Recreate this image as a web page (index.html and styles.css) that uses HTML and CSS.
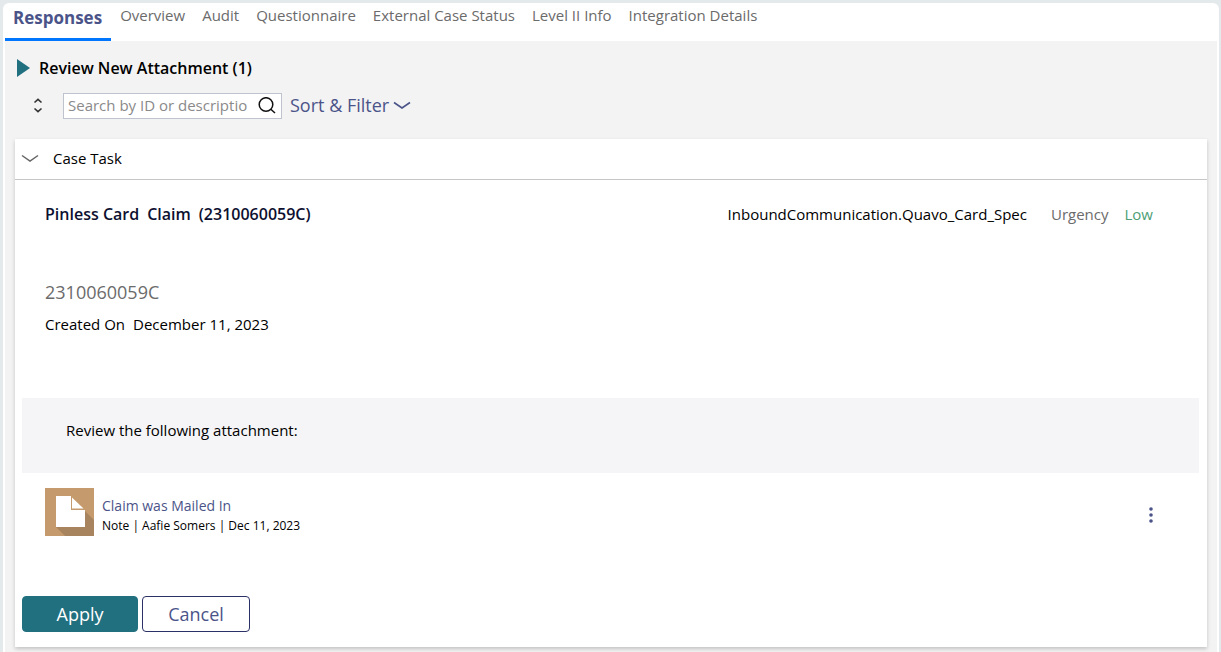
FILE: index.html
```
<!DOCTYPE html>
<html lang="en">
<head>
    <meta charset="UTF-8">
    <meta name="viewport" content="width=device-width, initial-scale=1.0">
    <title>Responses</title>
    <link rel="stylesheet" href="styles.css">
</head>
<body>
    <div class="panel">
        <nav class="tabs">
            <a href="#responses" class="tab active">Responses</a>
            <a href="#overview" class="tab">Overview</a>
            <a href="#audit" class="tab">Audit</a>
            <a href="#questionnaire" class="tab">Questionnaire</a>
            <a href="#status" class="tab">External Case Status</a>
            <a href="#level2" class="tab">Level II Info</a>
            <a href="#integration" class="tab">Integration Details</a>
        </nav>

        <main class="content">
            <h1 class="section-title">
                <svg width="13" height="18" viewBox="0 0 13 18"><path d="M0 0L13 9L0 18Z" fill="#217080"/></svg>
                Review New Attachment (1)
            </h1>

            <div class="toolbar">
                <button class="icon-button" aria-label="Expand or collapse all">
                    <svg width="10" height="16" viewBox="0 0 10 16" fill="none" stroke="#333" stroke-width="1.6"><path d="M1.5 4.5L5 1.3L8.5 4.5M1.5 10.5L5 13.7L8.5 10.5"/></svg>
                </button>
                <div class="search">
                    <input type="text" placeholder="Search by ID or description" aria-label="Search by ID or description">
                    <button class="icon-button" aria-label="Search">
                        <svg width="18" height="18" viewBox="0 0 18 18" fill="none" stroke="#111" stroke-width="1.5"><circle cx="8" cy="7.5" r="6.8"/><path d="M12.8 12.3L17 16"/></svg>
                    </button>
                </div>
                <button class="sort-button">
                    Sort &amp; Filter
                    <svg width="18" height="8" viewBox="0 0 18 8" fill="none" stroke="#4b5489" stroke-width="1.6"><path d="M1 1.5L9 7L17 1.5"/></svg>
                </button>
            </div>

            <section class="card">
                <h2 class="card-header">
                    <svg width="18" height="8" viewBox="0 0 18 8" fill="none" stroke="#666" stroke-width="1.5"><path d="M1 1.5L9 7L17 1.5"/></svg>
                    Case Task
                </h2>

                <div class="claim-row">
                    <h3 class="claim-title"><span>Pinless Card</span> <span>Claim</span> <span>(2310060059C)</span></h3>
                    <span class="claim-type">InboundCommunication.Quavo_Card_Spec</span>
                    <span class="urgency-label">Urgency</span>
                    <span class="urgency">Low</span>
                </div>

                <div class="case-info">
                    <div class="case-id">2310060059C</div>
                    <div class="created"><span>Created On</span> <span>December 11, 2023</span></div>
                </div>

                <p class="instruction">Review the following attachment:</p>

                <div class="attachment">
                    <svg class="file-icon" width="49" height="48" viewBox="0 0 49 48">
                        <path d="M0 0H49V48H0Z" fill="#c59b6d"/>
                        <path d="M40 23L49 32V48H20L11 39Z" fill="#a8845e"/>
                        <path d="M11 8H26V22H40V39H11Z" fill="#fff"/>
                        <path d="M27 9.5L38.5 20.5H27Z" fill="#fff"/>
                    </svg>
                    <div class="attachment-text">
                        <a href="#note">Claim was Mailed In</a>
                        <div class="meta">Note | Aafie Somers | Dec 11, 2023</div>
                    </div>
                    <button class="icon-button more" aria-label="Attachment actions">
                        <svg width="4" height="16" viewBox="0 0 4 16" fill="#4b5489"><circle cx="2" cy="2" r="1.8"/><circle cx="2" cy="8" r="1.8"/><circle cx="2" cy="14" r="1.8"/></svg>
                    </button>
                </div>

                <div class="actions">
                    <button class="btn primary">Apply</button>
                    <button class="btn">Cancel</button>
                </div>
            </section>
        </main>
    </div>
</body>
</html>
```
FILE: styles.css
```
* {
    box-sizing: border-box;
}
body {
    margin: 0;
    padding: 3px 2px 0 3px;
    min-height: 100vh;
    display: flex;
    background: #e4eaec;
    color: #000;
    font-family: "Open Sans", "Noto Sans", sans-serif;
    font-size: 15px;
    line-height: 20px;
}
h1, h2, h3, p {
    margin: 0;
    font-weight: normal;
}
a {
    color: #4b5489;
    text-decoration: none;
}
svg {
    display: block;
    flex: none;
}
button {
    font-family: inherit;
    cursor: pointer;
}
.panel {
    flex: 1;
    display: flex;
    flex-direction: column;
    padding: 0 2px;
    background: #fff;
    border-radius: 6px 6px 0 0;
}
.tabs {
    display: flex;
    align-items: flex-start;
    gap: 17px;
    height: 38px;
}
.tab {
    padding-top: 2px;
    color: #6b6b6b;
}
.tab.active {
    height: 38px;
    padding: 5px 9px 0 8px;
    margin-right: -8px;
    border-bottom: 3px solid #0076ff;
    color: #4b5489;
    font-size: 17px;
    font-weight: bold;
}
.content {
    flex: 1;
    padding: 16px 10px 5px;
    background: #f3f3f3;
}
.section-title {
    display: flex;
    align-items: center;
    gap: 9px;
    padding-left: 2px;
    font-size: 16px;
    line-height: 22px;
    font-weight: 600;
}
.toolbar {
    display: flex;
    align-items: center;
    padding: 14px 0 20px 18px;
}
.icon-button {
    padding: 0;
    border: none;
    background: none;
}
.search {
    display: flex;
    align-items: center;
    width: 219px;
    height: 26px;
    margin: 0 8px 0 20px;
    padding: 0 5px 0 4px;
    background: #fff;
    border: 1px solid #bfc3ce;
}
.search input {
    flex: 1;
    min-width: 0;
    margin-right: 10px;
    padding: 0 0 2px;
    border: none;
    outline: none;
    background: none;
    font-family: inherit;
    font-size: 15px;
}
.search input::placeholder {
    color: #8a8a8a;
}
.sort-button {
    display: flex;
    align-items: center;
    gap: 4px;
    padding: 0 0 2px;
    border: none;
    background: none;
    color: #4b5489;
    font-size: 18px;
    line-height: 24px;
}
.card {
    background: #fff;
    box-shadow: 0 2px 4px rgba(0, 0, 0, 0.2);
    padding-bottom: 15px;
}
.card-header {
    display: flex;
    align-items: center;
    gap: 14px;
    height: 41px;
    padding: 0 0 2px 6px;
    border-bottom: 1px solid #c6c6c6;
    font-size: 15px;
}
.claim-row {
    display: flex;
    align-items: center;
    padding: 24px 54px 0 30px;
}
.claim-title {
    display: flex;
    gap: 8px;
    flex: 1;
    color: #0d1030;
    font-size: 16px;
    font-weight: 600;
}
.urgency-label {
    margin: 0 16px 0 24px;
    color: #6b6b6b;
}
.urgency {
    color: #4d9e76;
}
.case-info {
    padding: 56px 30px 64px;
}
.case-id {
    margin-bottom: 10px;
    color: #6b6b6b;
    font-size: 18px;
    line-height: 24px;
}
.created {
    display: flex;
    gap: 8px;
}
.instruction {
    margin: 0 8px 14px 7px;
    padding: 22px 44px 33px;
    background: #f5f5f7;
}
.attachment {
    display: flex;
    align-items: center;
    padding: 0 54px 0 30px;
}
.attachment-text {
    flex: 1;
    padding: 8px 0 0 8px;
}
.attachment-text a {
    font-size: 14px;
}
.more {
    padding-top: 6px;
}
.meta {
    font-size: 12px;
}
.actions {
    display: flex;
    gap: 4px;
    padding: 60px 7px 0;
}
.btn {
    width: 108px;
    height: 36px;
    padding: 0;
    border: 1px solid #2b3066;
    border-radius: 4px;
    background: #fff;
    color: #4b5489;
    font-size: 18px;
}
.btn.primary {
    width: 116px;
    border-color: #217080;
    background: #217080;
    color: #fff;
}
```
